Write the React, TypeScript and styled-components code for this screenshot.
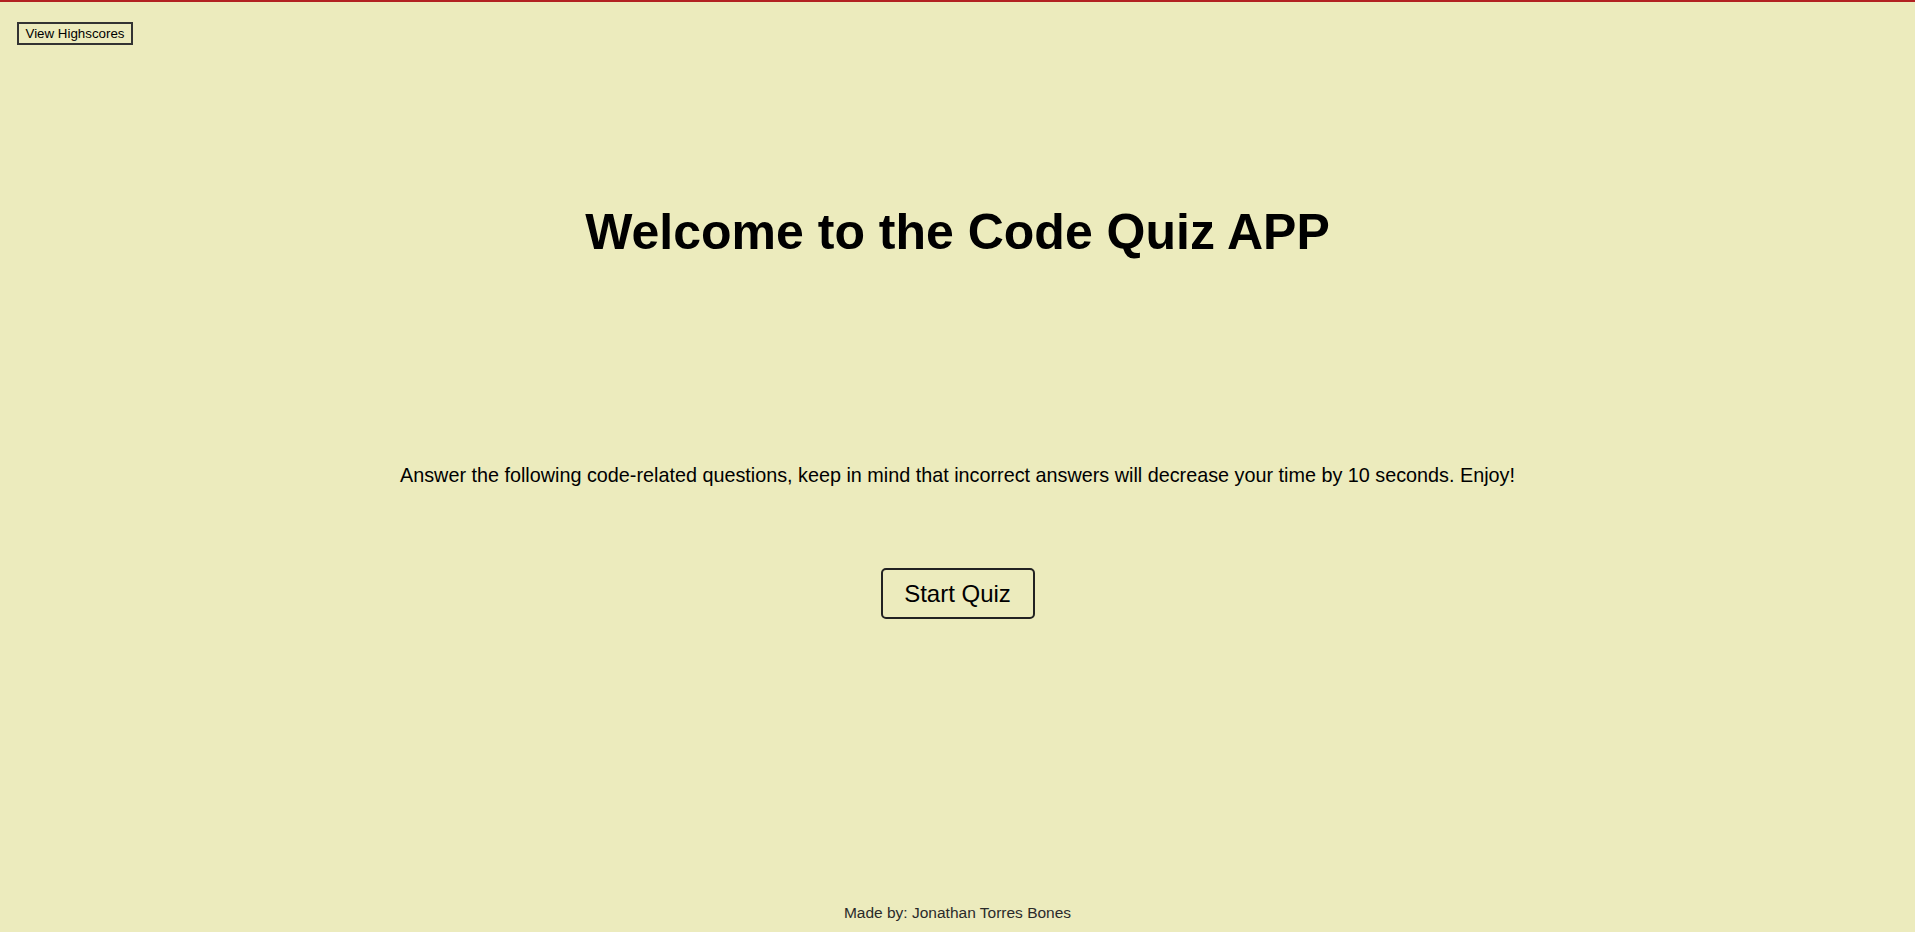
import React from "react";
import styled, { createGlobalStyle } from "styled-components";

const Global = createGlobalStyle`
  html, body { margin: 0; padding: 0; }
  body {
    background: #ecebbd;
    font-family: "Liberation Sans", Arial, sans-serif;
    color: #000;
  }
`;

const Page = styled.div`
  min-height: 932px;
  box-sizing: border-box;
  border-top: 2px solid #b22222;
  display: flex;
  flex-direction: column;
`;

const Header = styled.header`
  padding: 20px 17px 0;
`;

const SmallButton = styled.button`
  font-family: "Liberation Sans", Arial, sans-serif;
  font-size: 13.33px;
  background: transparent;
  color: #000;
  border: 2px solid #333;
  padding: 2px 6px;
  height: 23px;
  width: 116px;
  cursor: pointer;
`;

const Main = styled.main`
  flex: 1;
  text-align: center;
`;

const Title = styled.h1`
  font-size: 50px;
  font-weight: bold;
  margin: 158px 0 0;
`;

const Intro = styled.p`
  font-size: 19.8px;
  margin: 203px 0 0;
`;

const StartButton = styled.button`
  font-family: "Liberation Sans", Arial, sans-serif;
  font-size: 24px;
  background: transparent;
  color: #000;
  border: 2px solid #222;
  border-radius: 5px;
  width: 154px;
  height: 51px;
  margin-top: 81px;
  cursor: pointer;
`;

const Footer = styled.footer`
  text-align: center;
  font-size: 15.5px;
  color: #2a2a2a;
  padding-bottom: 10px;
`;

export default function App() {
  return (
    <>
      <Global />
      <Page>
        <Header>
          <SmallButton>View Highscores</SmallButton>
        </Header>
        <Main>
          <Title>Welcome to the Code Quiz APP</Title>
          <Intro>
            Answer the following code-related questions, keep in mind that incorrect answers will decrease your time by 10 seconds. Enjoy!
          </Intro>
          <StartButton>Start Quiz</StartButton>
        </Main>
        <Footer>Made by: Jonathan Torres Bones</Footer>
      </Page>
    </>
  );
}
